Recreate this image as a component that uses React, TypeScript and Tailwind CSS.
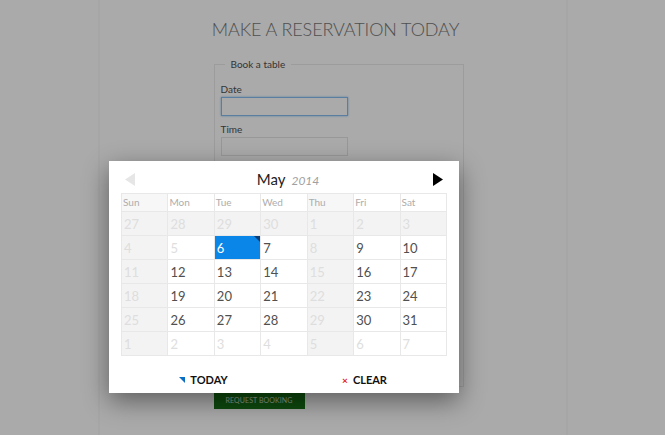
import React from 'react';

type Cell = { d: number; shade?: boolean; off?: boolean; sel?: boolean };

const days = ['Sun', 'Mon', 'Tue', 'Wed', 'Thu', 'Fri', 'Sat'];

// rows of the May 2014 view
const weeks: number[][] = [
  [27, 28, 29, 30, 1, 2, 3],
  [4, 5, 6, 7, 8, 9, 10],
  [11, 12, 13, 14, 15, 16, 17],
  [18, 19, 20, 21, 22, 23, 24],
  [25, 26, 27, 28, 29, 30, 31],
  [1, 2, 3, 4, 5, 6, 7],
];

function cellFor(row: number, col: number): Cell {
  const d = weeks[row][col];
  const shade = row === 0 || col === 0 || col === 4;
  const off = row === 0 || row === 5 || col === 0 || col === 4 || (row === 1 && col < 2);
  return { d, shade, off, sel: row === 1 && col === 2 };
}

function Picker() {
  return (
    <div className="absolute left-[109px] top-[161px] w-[350px] h-[232px] bg-white shadow-[0_8px_24px_rgba(0,0,0,0.45)] px-[12px] pt-[7px]">
      <div className="flex items-center justify-between h-[22px] px-[4px]">
        <svg width="10" height="13" viewBox="0 0 10 13">
          <polygon points="10,0 10,13 0,6.5" fill="#e6e6e6" />
        </svg>
        <div className="flex items-baseline gap-[6px] ml-[8px]">
          <span className="text-[15px] text-[#222]">May</span>
          <span className="text-[12px] italic text-[#a0a0a0]">2014</span>
        </div>
        <svg width="10" height="13" viewBox="0 0 10 13">
          <polygon points="0,0 10,6.5 0,13" fill="#000" />
        </svg>
      </div>
      <div className="mt-[3px] grid grid-cols-7 border-t border-l border-[#e8e8e8]">
        {days.map((n, i) => (
          <div
            key={n}
            className={`h-[18px] border-r border-b border-[#e8e8e8] pl-[1px] text-[10px] leading-[17px] text-[#adadad] ${
              i === 0 || i === 4 ? 'bg-[#f7f7f7]' : 'bg-white'
            }`}
          >
            {n}
          </div>
        ))}
        {weeks.map((w, r) =>
          w.map((_, c) => {
            const cell = cellFor(r, c);
            return (
              <div
                key={`${r}-${c}`}
                className={`relative h-[24px] border-r border-b border-[#e8e8e8] pl-[2px] text-[13px] leading-[24px] ${
                  cell.sel
                    ? 'bg-[#0a86e9] text-white'
                    : cell.shade
                    ? 'bg-[#f3f3f3]'
                    : 'bg-white'
                } ${cell.sel ? '' : cell.off ? 'text-[#dedede]' : 'text-[#505050]'}`}
              >
                {cell.d}
                {cell.sel && (
                  <span className="absolute right-0 top-0 w-0 h-0 border-t-[6px] border-l-[6px] border-t-[#0b3f7a] border-l-transparent" />
                )}
              </div>
            );
          })
        )}
      </div>
      <div className="flex mt-[16px] text-[11px] font-bold text-[#111]">
        <div className="flex-1 flex items-center justify-center gap-[5px] pl-[2px]">
          <span className="w-0 h-0 border-t-[6px] border-l-[6px] border-t-[#0a6ec4] border-l-transparent" />
          TODAY
        </div>
        <div className="flex-1 flex items-center justify-center gap-[5px] pr-[2px]">
          <span className="text-[#e02020] text-[10px] font-bold">×</span>
          CLEAR
        </div>
      </div>
    </div>
  );
}

export default function App() {
  return (
    <div className="relative w-[665px] h-[435px] overflow-hidden bg-white font-['Lato','Liberation_Sans',sans-serif]">
      <div className="mx-auto w-[470px] h-full border-x-[2px] border-[#fafafa] pt-[17px]">
        <h1 className="text-center text-[18px] font-light tracking-[-0.1px] text-[#777] leading-[24px] pl-[6px]">
          MAKE A RESERVATION TODAY
        </h1>
        <fieldset className="ml-[114px] mt-[16px] w-[250px] h-[330px] border border-[#eaeaea] px-[6px]">
          <legend className="ml-[4px] px-[6px] text-[10px] text-[#505050]">Book a table</legend>
          <label className="block mt-[10px] text-[10px] text-[#505050]">Date</label>
          <div className="w-[127px] h-[19px] border border-[#86bdf0] shadow-[0_0_2px_#86bdf0] bg-white" />
          <label className="block mt-[6px] text-[10px] text-[#505050]">Time</label>
          <div className="w-[127px] h-[19px] border border-[#e4e4e4] bg-white" />
          <div className="mt-[24px] w-[127px] h-[19px] border border-[#e4e4e4] bg-white" />
        </fieldset>
        <button className="block ml-[114px] mt-[5px] w-[91px] h-[17px] bg-[#167016] text-[7px] leading-[17px] text-[#cfe5cf] tracking-[0.1px]">
          REQUEST BOOKING
        </button>
      </div>
      <div className="absolute inset-0 bg-black/[0.335]" />
      <Picker />
    </div>
  );
}
